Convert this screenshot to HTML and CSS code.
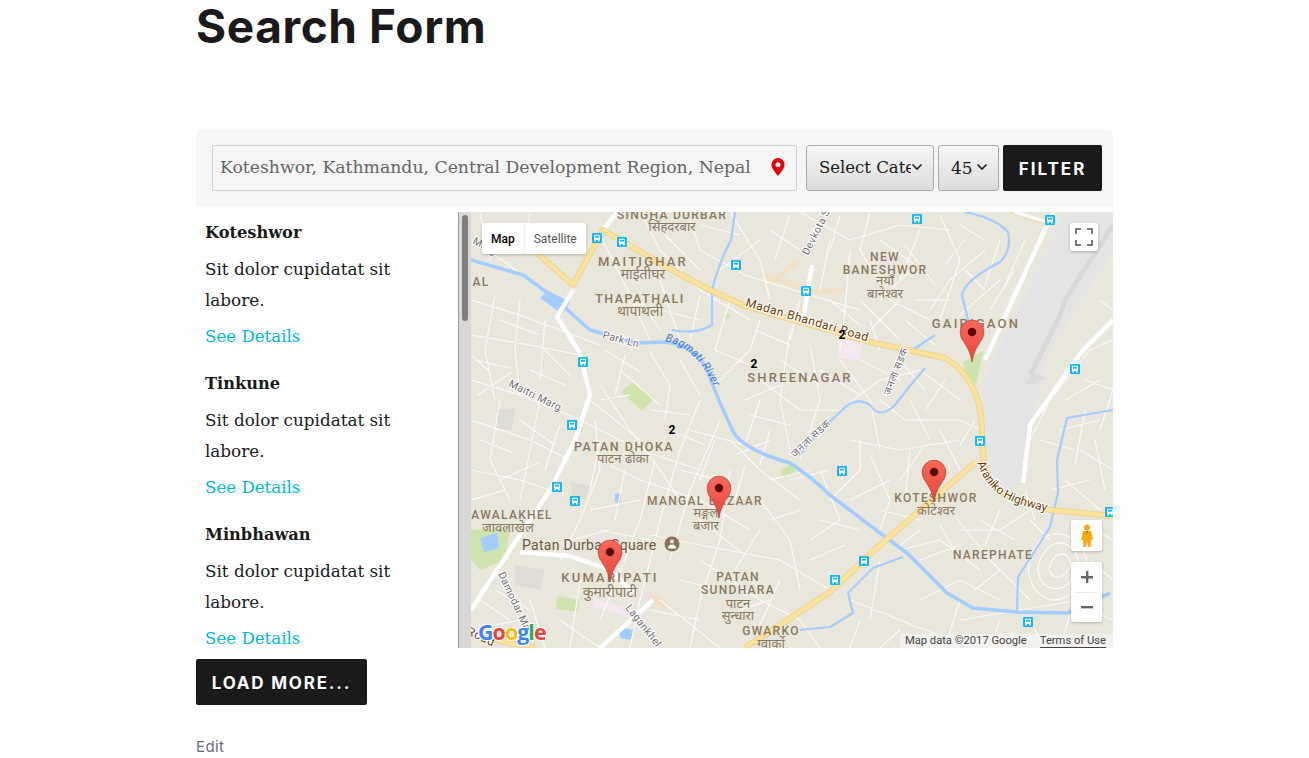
FILE: index.html
```html
<!DOCTYPE html>
<html lang="en">
<head>
<meta charset="utf-8">
<title>Search Form</title>
<link rel="stylesheet" href="styles.css">
</head>
<body>
<main class="page">
  <h1 class="title">Search Form</h1>
  <form class="filter">
    <div class="location">
      <input class="location-input" type="text" value="Koteshwor, Kathmandu, Central Development Region, Nepal">
      <svg class="pin" width="14" height="18" viewBox="0 0 14 18"><path fill="#e2000f" fill-rule="evenodd" d="M7 0a6.6 6.6 0 0 0-6.6 6.6C.4 11 7 18 7 18s6.6-7 6.6-11.4A6.6 6.6 0 0 0 7 0zm0 4.2a2.5 2.5 0 1 1 0 5 2.5 2.5 0 0 1 0-5z"/></svg>
    </div>
    <div class="select-wrap select-cat">
      <select class="select"><option>Select Category</option></select>
      <svg class="chev" width="12" height="8" viewBox="0 0 12 8"><path d="M1.5 1.5 6 6l4.5-4.5" fill="none" stroke="#222" stroke-width="1.6"/></svg>
    </div>
    <div class="select-wrap select-num">
      <select class="select"><option>45</option></select>
      <svg class="chev" width="12" height="8" viewBox="0 0 12 8"><path d="M1.5 1.5 6 6l4.5-4.5" fill="none" stroke="#222" stroke-width="1.6"/></svg>
    </div>
    <button class="btn btn-filter" type="button">FILTER</button>
  </form>

  <section class="results">
    <div class="list">
      <article class="item">
        <h3 class="item-title">Koteshwor</h3>
        <p class="item-text">Sit dolor cupidatat sit labore.</p>
        <a class="item-link" href="#">See Details</a>
      </article>
      <article class="item">
        <h3 class="item-title">Tinkune</h3>
        <p class="item-text">Sit dolor cupidatat sit labore.</p>
        <a class="item-link" href="#">See Details</a>
      </article>
      <article class="item">
        <h3 class="item-title">Minbhawan</h3>
        <p class="item-text">Sit dolor cupidatat sit labore.</p>
        <a class="item-link" href="#">See Details</a>
      </article>
    </div>
    <div class="scrollbar"><div class="thumb"></div></div>
    <div class="map">
      <svg class="map-svg" width="642" height="436" viewBox="471 212 642 436">
        <defs>
          <linearGradient id="mk" x1="0" y1="0" x2="0" y2="1">
            <stop offset="0" stop-color="#f8695c"/>
            <stop offset="1" stop-color="#e8443a"/>
          </linearGradient>
          <g id="bus">
            <rect x="-5" y="-5" width="10" height="10" rx="1" fill="#19b5f5"/>
            <rect x="-3" y="-3.2" width="6" height="5.2" rx="1" fill="#fff"/>
            <rect x="-2.2" y="-2.2" width="4.4" height="1.8" fill="#19b5f5"/>
            <rect x="-2.6" y="2" width="1.4" height="1.5" fill="#fff"/>
            <rect x="1.2" y="2" width="1.4" height="1.5" fill="#fff"/>
          </g>
          <g id="marker">
            <path d="M0 0C-1.5-10-5-15-8.500-20.500-11-24-11.800-27-11.800-30a11.800 11.800 0 0 1 23.600 0c0 3-.8 6-3.300 9.500C5-15 1.500-10 0 0z" fill="url(#mk)" stroke="#b5453a" stroke-width=".8"/>
            <circle cx="0" cy="-30" r="4.200" fill="#5a0b0b"/>
          </g>
          <path id="p-madan" d="M745 306 L873 343"/>
          <path id="p-araniko" d="M977 463 Q985 485 1003 497 Q1022 508 1070 516"/>
          <path id="p-bag" d="M665 341 Q700 348 718 397"/>
          <path id="p-maitri" d="M508 386 L561 412"/>
          <path id="p-damodar" d="M498 574 L526 634"/>
          <path id="p-lagan" d="M625 608 L660 652"/>
          <path id="p-devkota" d="M808 256 Q820 232 831 210"/>
          <path id="p-jan1" d="M795 458 L832 423"/>
          <path id="p-jan2" d="M890 396 L907 352"/>
          <path id="p-park" d="M602 338 L640 348"/>
          <path id="p-road" d="M466 634 L496 648"/>
          <path id="p-marg" d="M472 243 L492 254"/>
        </defs>
        <rect x="471" y="212" width="642" height="436" fill="#e9e6dc"/>

        <!-- land use -->
        <path fill="#e4e4e4" d="M1065 212 H1113 V250 L1045 360 1030 437 1021 484 1003 494 990 470 984 440 982 385 Z"/>
        <path fill="none" stroke="#d8d8d6" stroke-width="5" d="M1113 225 1065 300 1060 315 1030 375"/>
        <path fill="#dcdcda" d="M1034 372 1048 378 1033 385 1024 383Z"/>
        <path fill="#cfe3ae" d="M963 362 984 350 976 385 965 372Z"/>
        <path fill="#cfe3ae" d="M621 392 633 382 655 398 642 411Z"/>
        <path fill="#cfe3ae" d="M471 530 510 528 505 560 480 570 471 560Z"/>
        <path fill="#a3ccff" d="M480 538 497 533 499 548 484 552Z"/>
        <path fill="#cfe3ae" d="M557 596 579 600 578 612 556 609Z"/>
        <path fill="#f5e8ee" d="M594 598 640 612 636 620 592 606Z"/>
        <path fill="#f5e8ee" d="M838 340 862 342 860 360 838 358Z"/>
        <path fill="#f0e0c6" d="M650 592 668 602 664 610 648 600Z"/>
        <path fill="#a3ccff" d="M619 627 634 630 630 640 620 638Z"/>
        <path fill="#a3ccff" d="M615 494 621 493 620 503 615 502Z"/>
        <path fill="#cfe3ae" d="M780 470 792 464 796 472 784 478Z"/>
        <path fill="#cfe3ae" d="M723 316 728 312 730 318 724 320Z"/>
        <path fill="#ddddd6" d="M497 410 515 408 512 430 496 430Z M571 482 590 486 585 500 572 498Z M515 565 545 570 540 590 515 585Z"/>
        <path fill="none" stroke="#f0e0c6" stroke-width="5" d="M765 275 815 292 845 290 M770 283 800 260 M805 300 800 312"/>
        <path fill="none" stroke="#f0e0c6" stroke-width="4" d="M648 594 668 606"/>

        <!-- minor streets -->
        <path fill="none" stroke="#fbfaf6" stroke-width="1.200" stroke-linejoin="round" d="
          M471 240 L505 262 L540 290 M471 300 L520 315 L560 330 L600 345 M480 212 L490 260 M530 212 L525 250
          M471 335 L530 345 L580 355 M495 295 L485 350 L495 400 M520 300 L515 350 L520 395 M545 320 L540 380
          M471 380 L520 395 L580 420 L640 450 L700 470 M471 420 L530 440 L570 460 M500 400 L490 460 L510 500
          M471 470 L520 480 L550 490 M540 400 L530 450 L520 500 M600 385 L630 430 L660 470 L680 500
          M590 400 L640 440 M595 420 L600 470 L580 520 L560 560 M610 465 L640 480 L700 500 L750 530
          M655 460 L640 520 L625 560 L600 620 M700 400 L680 450 L660 520 L640 600 L630 648 M720 420 L690 490 L670 560
          M730 440 L760 470 L800 500 M690 430 L745 445 L760 400 M715 440 L700 480 M730 470 L720 540 L700 600 L690 648
          M650 535 L700 545 L780 560 L830 590 M760 500 L790 540 L800 590 M700 560 L760 600 L800 620 L820 648
          M660 600 L720 648 M560 620 L600 648 M471 630 L520 620 M530 600 L545 648 M580 580 L570 648
          M600 235 L625 285 L650 340 M640 212 L660 250 L700 290 L750 320 M660 280 L680 340 M620 300 L700 320
          M690 220 L700 250 L745 275 L810 295 L860 310 M730 212 L760 260 L770 300 M800 212 L850 240 L900 225 L950 230
          M830 240 L820 290 M850 250 L845 310 L840 350 M870 212 L860 250 L890 300 L930 320 M920 230 L900 280
          M940 215 L960 260 L940 320 M985 250 L950 280 L930 310 M1000 280 L960 315 M860 300 L900 340
          M760 320 L750 350 L720 380 M790 330 L780 400 L790 450 M810 345 L820 400 L800 460 M840 360 L870 400 L880 450
          M760 380 L800 410 L840 410 L880 380 L920 370 L960 400 M880 400 L905 420 L960 420 L980 430
          M850 440 L900 450 L960 440 M870 455 L890 500 L880 530 M850 500 L890 480 M830 500 L860 470 L860 440
          M820 470 L840 520 L810 540 M910 450 L905 500 M950 510 L990 560 L1030 600 M960 530 L1000 530 L1030 510
          M900 550 L940 540 L980 570 M920 600 L960 580 L1000 600 M850 600 L900 620 L950 640 M880 560 L870 620
          M960 620 L1020 610 L1080 600 M1030 440 L1050 400 L1090 350 L1113 340 M1060 430 L1100 420 M1080 450 L1113 470
          M1050 490 L1090 480 M1085 380 L1113 390 L1100 430 M1100 300 L1113 310
          M1040 540 Q1060 525 1080 545 Q1095 565 1075 590 Q1055 610 1035 590 Q1020 565 1040 540
          M1048 548 Q1062 537 1074 550 Q1084 565 1070 582 Q1056 596 1042 582 Q1032 565 1048 548
          M1056 556 Q1064 551 1069 558 Q1073 567 1065 574 Q1057 580 1051 574 Q1046 566 1056 556
          M1030 520 L1050 540 M1090 560 L1113 580 M1090 610 L1113 620
          M475 360 L510 368 M478 395 L512 372 M500 320 L540 335 M471 355 L490 372 M530 370 L565 385 M545 350 L570 375
          M480 440 L512 452 M500 480 L540 462 M520 420 L555 445 M471 500 L505 490 M560 425 L545 470 M480 600 L510 620 M495 590 L530 610
          M605 350 L640 372 M625 355 L615 395 M650 352 L670 385 L665 420 M680 360 L700 395 M620 370 L660 405 M600 400 L630 395
          M670 430 L705 445 M650 410 L690 415 M600 440 L590 490 M625 470 L615 520 M640 500 L590 510 M600 530 L650 540 M570 540 L610 530
          M680 470 L720 480 M735 455 L770 440 M745 465 L735 500 M750 415 L790 425 M770 430 L760 465 M770 480 L810 470 M745 400 L780 385
          M760 530 L735 570 M700 520 L745 555 M680 580 L720 590 M650 610 L700 620 M740 610 L770 600 M780 580 L760 625 M810 560 L845 545
          M820 520 L860 530 M800 510 L770 520 M790 480 L830 470 M880 510 L920 520 M920 530 L900 545 M940 525 L960 560
          M900 480 L925 445 M910 400 L930 440 M940 430 L960 470 M960 445 L975 420 M945 380 L925 410 M900 360 L925 390 M860 360 L900 380
          M820 370 L860 395 M780 360 L820 385 M800 300 L790 340 M830 300 L860 325 M870 320 L880 350 M900 300 L870 330 M905 320 L935 345
          M700 225 L740 235 M665 235 L700 270 M720 270 L760 240 M770 230 L800 250 M790 215 L775 260 M840 215 L830 250 M880 240 L915 265
          M905 245 L935 285 M960 225 L985 240 M965 240 L945 265 M985 290 L965 270 M1000 240 L985 285 M1015 270 L990 310 M1025 240 L1005 285
          M915 300 L950 300 M880 300 L910 270 M640 300 L660 330 M700 295 L690 340 M730 300 L715 350 L750 365 M755 330 L790 345
          M1040 440 L1075 450 M1085 410 L1075 465 M1065 400 L1100 380 M1095 440 L1105 490 M1065 480 L1100 510 M1095 530 L1113 540
          M1030 620 L1045 648 M1000 620 L990 648 M960 600 L945 648 M900 630 L880 648 M860 620 L850 648 M1070 615 L1060 648
          M980 520 L1015 540 M1000 510 L985 545 M1025 490 L1035 520 M920 560 L960 545 M1000 570 L975 590"/>

        <!-- water -->
        <path fill="none" stroke="#a3ccff" stroke-width="3.500" stroke-linejoin="round" d="M471 260 L523 275 L553 297 L590 330 L637 343 L665 342 Q695 345 707 370 Q720 405 735 435 Q750 452 790 463 Q815 480 830 495 L880 533 L907 553 L947 593 L973 608 L1017 612 L1067 613 L1110 593"/>
        <path fill="none" stroke="#a3ccff" stroke-width="2.200" stroke-linejoin="round" d="M1113 410 L1067 418 L1057 460 L1058 493 L1050 527 L1018 577 L1017 612 M965 212 Q995 218 1008 232 Q1012 250 1000 262 Q965 280 962 295 Q968 320 970 328 M935 335 Q920 345 910 352 M800 455 Q820 430 840 412 Q855 395 870 405 Q880 420 895 405 Q910 385 925 368 M735 212 L731 240 Q720 260 712 290 L712 325 Q695 335 672 330 M848 593 L873 568 L903 557 M848 593 L853 613 L830 627 L800 630"/>
        <path fill="#a3ccff" d="M548 291 L570 302 562 314 540 298Z"/>

        <!-- highways -->
        <path fill="none" stroke="#fff" stroke-width="4.500" stroke-linejoin="round" d="M617 212 L603 230 M573 290 L557 317 L580 353 L590 395 L575 440 L550 490 L510 550 L471 610 M1053 212 L985 360 M1113 320 L1083 350 L1030 425 L1023 483 M520 552 L570 556 L610 570 L633 592 M812 265 L803 320 M653 600 L600 648"/>
        <path fill="none" stroke="#e8cf8a" stroke-width="6" stroke-linejoin="round" d="M537 253 L573 285 L603 230 L670 269 L710 290 L745 306 L870 342 L945 358 Q975 375 981 415 L984 465 Q992 490 1010 497 L1050 510 L1113 516 M745 648 L830 592 L880 545 L976 462 M495 640 L535 648"/>
        <path fill="none" stroke="#fbe29c" stroke-width="4.500" stroke-linejoin="round" d="M537 253 L573 285 L603 230 L670 269 L710 290 L745 306 L870 342 L945 358 Q975 375 981 415 L984 465 Q992 490 1010 497 L1050 510 L1113 516 M745 648 L830 592 L880 545 L976 462 M495 640 L535 648"/>
        <path fill="none" stroke="#f0e0c6" stroke-width="5" d="M1010 212 L1050 224"/>
        <path fill="none" stroke="#fff" stroke-width="3" d="M1015 212 L1050 223"/>

        <!-- transit -->
        <use href="#bus" x="597" y="238"/><use href="#bus" x="622" y="242"/><use href="#bus" x="736" y="265"/>
        <use href="#bus" x="806" y="291"/><use href="#bus" x="917" y="219"/><use href="#bus" x="1050" y="220"/>
        <use href="#bus" x="583" y="362"/><use href="#bus" x="572" y="425"/><use href="#bus" x="557" y="487"/>
        <use href="#bus" x="575" y="501"/><use href="#bus" x="1075" y="369"/><use href="#bus" x="980" y="441"/>
        <use href="#bus" x="842" y="471"/><use href="#bus" x="864" y="561"/><use href="#bus" x="835" y="580"/>
        <use href="#bus" x="1028" y="622"/><use href="#bus" x="1110" y="512"/>

        <!-- area labels -->
        <g class="lbl">
          <text x="672" y="219">SINGHA DURBAR</text>
          <text class="lbl-big" x="643" y="266">MAITIGHAR</text>
          <text class="lbl-mid" x="640" y="303">THAPATHALI</text>
          <text x="885" y="261">NEW</text>
          <text x="885" y="274">BANESHWOR</text>
          <text class="lbl-big" x="976" y="328">GAIRIGAON</text>
          <text class="lbl-big" x="800" y="382">SHREENAGAR</text>
          <text class="lbl-mid" x="624" y="451">PATAN DHOKA</text>
          <text x="705" y="505">MANGAL BAZAAR</text>
          <text x="512" y="519">AWALAKHEL</text>
          <text class="lbl-big" x="610" y="582">KUMARIPATI</text>
          <text x="738" y="581">PATAN</text>
          <text x="738" y="594">SUNDHARA</text>
          <text x="771" y="635">GWARKO</text>
          <text x="936" y="502">KOTESHWOR</text>
          <text x="993" y="559">NAREPHATE</text>
          <text x="481" y="286">AL</text>
        </g>
        <g class="lbl-dev">
          <text x="672" y="231">सिंहदरबार</text>
          <text class="dev-big" x="643" y="279">माईतीघर</text>
          <text class="dev-big" x="640" y="316">थापाथली</text>
          <text x="885" y="285">नयाँ</text>
          <text x="885" y="298">बानेश्वर</text>
          <text x="623" y="463">पाटन ढोका</text>
          <text x="706" y="517">मङ्गल</text>
          <text x="706" y="530">बजार</text>
          <text x="508" y="532">जावलाखेल</text>
          <text class="dev-big" x="610" y="597">कुमारीपाटी</text>
          <text x="738" y="608">पाटन</text>
          <text x="738" y="620">सुन्धारा</text>
          <text x="771" y="648">ग्वार्को</text>
          <text x="936" y="515">कोटेश्वर</text>
        </g>
        <text class="poi" x="522" y="550">Patan Durbar Square</text>
        <circle cx="672" cy="544" r="7.500" fill="#8a7158"/>
        <circle cx="672" cy="541.500" r="2" fill="#fff"/>
        <path d="M668 548.500a4 4 0 0 1 8 0z" fill="#fff"/>

        <!-- road labels -->
        <text class="road"><textPath href="#p-madan">Madan Bhandari Road</textPath></text>
        <text class="road road-tight"><textPath href="#p-araniko">Araniko Highway</textPath></text>
        <text class="road"><textPath href="#p-road">Road</textPath></text>
        <text class="river"><textPath href="#p-bag">Bagmati River</textPath></text>
        <text class="street"><textPath href="#p-maitri">Maitri Marg</textPath></text>
        <text class="street"><textPath href="#p-damodar">Damodar Marg</textPath></text>
        <text class="street"><textPath href="#p-lagan">Lagankhel</textPath></text>
        <text class="street"><textPath href="#p-devkota">Devkota Sadak</textPath></text>
        <text class="street"><textPath href="#p-park">Park Ln</textPath></text>
        <text class="street"><textPath href="#p-marg">Marg</textPath></text>
        <text class="street"><textPath href="#p-jan1">जनला सडक</textPath></text>
        <text class="street"><textPath href="#p-jan2">जनला सडक</textPath></text>

        <text class="num" x="842" y="339">2</text>
        <text class="num" x="754" y="368">2</text>
        <text class="num" x="672" y="434">2</text>

        <use href="#marker" x="972" y="362"/>
        <use href="#marker" x="719" y="518"/>
        <use href="#marker" x="934" y="502"/>
        <use href="#marker" x="610" y="582"/>

        <text class="google" x="478" y="640"><tspan fill="#4285f4">G</tspan><tspan fill="#ea4335">o</tspan><tspan fill="#fbbc05">o</tspan><tspan fill="#4285f4">g</tspan><tspan fill="#34a853">l</tspan><tspan fill="#ea4335">e</tspan></text>
      </svg>

      <div class="type-toggle">
        <span class="type-btn type-active">Map</span>
        <span class="type-btn">Satellite</span>
      </div>
      <button class="ctl fullscreen" type="button" aria-label="Full screen">
        <svg width="18" height="18" viewBox="0 0 18 18"><path fill="none" stroke="#777" stroke-width="2" d="M1 6V1h5M12 1h5v5M17 12v5h-5M6 17H1v-5"/></svg>
      </button>
      <button class="ctl pegman" type="button" aria-label="Street View">
        <svg width="14" height="24" viewBox="0 0 14 24"><circle cx="7" cy="3.500" r="3" fill="#f5a80f"/><path d="M3 7h8l2 9h-2l-.5 7H8l-1-6-1 6H3.500L3 16H1z" fill="#f5a80f"/><path d="M6 7h2l-1 4z" fill="#c7700a"/></svg>
      </button>
      <div class="zoom">
        <button class="zoom-btn" type="button" aria-label="Zoom in"><svg width="12" height="12" viewBox="0 0 12 12"><path d="M5 0h2.400v5H12v2.400H7.400V12H5V7.400H0V5h5z" fill="#666"/></svg></button>
        <span class="zoom-sep"></span>
        <button class="zoom-btn" type="button" aria-label="Zoom out"><svg width="12" height="12" viewBox="0 0 12 12"><path d="M0 5h12v2.400H0z" fill="#666"/></svg></button>
      </div>
      <div class="attrib">
        <span>Map data ©2017 Google</span>
        <a class="terms" href="#">Terms of Use</a>
      </div>
    </div>
  </section>

  <button class="btn btn-more" type="button">LOAD MORE...</button>
  <a class="edit" href="#">Edit</a>
</main>
</body>
</html>
```

FILE: styles.css
```css
* { box-sizing: border-box; }
html, body { margin: 0; padding: 0; background: #fff; }
body { height: 758px; overflow: hidden; font-family: "DejaVu Serif", "Liberation Serif", serif; color: #1a1a1a; }

.page { width: 917px; margin-left: 196px; display: flex; flex-direction: column; align-items: flex-start; }

.title { margin: 0; height: 130px; font: 700 46px/53px Inter, "Liberation Sans", sans-serif; letter-spacing: .6px; color: #1a1a1a; }

.filter { width: 917px; height: 76px; background: #f5f5f5; border-radius: 5px 5px 0 0; padding: 15px 11px 15px 16px; display: flex; gap: 4px; align-items: stretch; }
.location { position: relative; width: 585px; margin-right: 5px; }
.location-input { width: 100%; height: 100%; border: 1px solid #ccc; border-radius: 2px; background: #f5f5f5; padding: 0 40px 2px 7px; font: 400 17.250px "DejaVu Serif", serif; color: #666; outline: none; }
.pin { position: absolute; right: 12px; top: 13px; }
.select-wrap { position: relative; }
.select-cat { width: 128px; }
.select-num { width: 61px; }
.select { appearance: none; -webkit-appearance: none; width: 100%; height: 100%; border: 1px solid #aaa; border-radius: 3px; background: linear-gradient(#f6f6f6, #dcdcdc); padding: 0 22px 2px 12px; font: 400 16.500px "DejaVu Serif", serif; color: #1a1a1a; overflow: hidden; white-space: nowrap; }
.select-num .select { font-size: 17px; padding-bottom: 0; }
.chev { position: absolute; right: 11px; top: 18px; }
.btn { border: 0; border-radius: 2px; background: #1a1a1a; color: #fff; font: 700 17px Inter, "Liberation Sans", sans-serif; letter-spacing: 2px; padding: 2px 0 0; }
.btn-filter { width: 99px; }

.results { width: 917px; height: 436px; margin-top: 6px; display: flex; }
.list { width: 262px; height: 436px; overflow: hidden; padding: 9px 0 0 9px; }
.item { margin-bottom: 20px; }
.item-title { margin: 0 0 9px; font: 700 16.200px/24px "DejaVu Serif", serif; color: #1a1a1a; }
.item-text { margin: 0 0 5px; width: 200px; font-size: 16.800px; line-height: 31px; color: #1a1a1a; }
.item-link { display: block; font-size: 16.650px; line-height: 31px; color: #00b9d8; text-decoration: none; }

.scrollbar { width: 13px; height: 436px; background: #d8d8d8; border-left: 1px solid #999; padding: 3px 3px 0 3px; flex: none; }
.thumb { width: 6px; height: 106px; border-radius: 3px; background: #808080; }

.map { position: relative; width: 642px; height: 436px; overflow: hidden; flex: none; }
.map-svg { display: block; }

.lbl text, .lbl-dev text { text-anchor: middle; }
.lbl { font: 500 12px Roboto, sans-serif; letter-spacing: 1.300px; fill: #8b7a5f; }
.lbl .lbl-big { font-size: 13px; letter-spacing: 2.200px; }
.lbl .lbl-mid { font-size: 12.500px; letter-spacing: 1.500px; }
.lbl-dev { font: 400 13px "Noto Sans", Roboto, sans-serif; fill: #8b7a5f; }
.lbl-dev .dev-big { font-size: 14px; }
.poi { font: 400 14px Roboto, sans-serif; fill: #6e5a44; letter-spacing: .3px; }
.road { font: 400 12px Roboto, sans-serif; fill: #6b3d06; stroke: #fff; stroke-width: 2px; paint-order: stroke; letter-spacing: .5px; }
.road-tight { letter-spacing: 0; }
.river { font: italic 400 11px Roboto, sans-serif; fill: #3f75c9; letter-spacing: .3px; }
.street { font: 400 10.500px Roboto, sans-serif; fill: #6f6f6f; stroke: #fff; stroke-width: 2px; paint-order: stroke; letter-spacing: .3px; }
.num { font: 700 12px Roboto, sans-serif; fill: #000; text-anchor: middle; }
.google { font: 700 21.500px "Open Sans", sans-serif; stroke: #fff; stroke-width: 2px; paint-order: stroke; letter-spacing: -1px; }

.type-toggle { position: absolute; left: 11px; top: 11px; height: 31px; display: flex; background: #fff; border-radius: 2px; box-shadow: 0 1px 3px rgba(0,0,0,.25); }
.type-btn { display: flex; align-items: center; padding: 0 9px; font: 400 12px Roboto, sans-serif; color: #565656; border-left: 1px solid #eee; }
.type-active { color: #000; font-weight: 500; border-left: 0; }

.ctl { position: absolute; border: 0; padding: 0; background: #fff; border-radius: 2px; display: flex; align-items: center; justify-content: center; box-shadow: 0 1px 3px rgba(0,0,0,.25); }
.fullscreen { left: 599px; top: 11px; width: 28px; height: 28px; }
.pegman { left: 600px; top: 308px; width: 31px; height: 31px; }
.zoom { position: absolute; left: 600px; top: 350px; width: 31px; height: 60px; background: #fff; border-radius: 2px; box-shadow: 0 1px 3px rgba(0,0,0,.25); display: flex; flex-direction: column; align-items: center; }
.zoom-btn { flex: 1; border: 0; padding: 0; background: none; display: flex; align-items: center; justify-content: center; }
.zoom-sep { width: 21px; height: 1px; background: #e6e6e6; }
.attrib { position: absolute; right: 0; bottom: 0; height: 14px; display: flex; gap: 13px; padding: 0 7px 0 5px; background: rgba(245,245,245,.7); font: 400 11.200px/14px Roboto, sans-serif; color: #444; }
.terms { color: #444; text-decoration: none; border-bottom: 1px solid #444; }

.btn-more { width: 171px; height: 46px; margin-top: 11px; font: 700 17px Inter, "Liberation Sans", sans-serif; letter-spacing: 1.800px; }
.edit { margin-top: 33px; font: 400 15px/17px Inter, sans-serif; letter-spacing: .4px; color: #6b6b7a; text-decoration: none; }
```
